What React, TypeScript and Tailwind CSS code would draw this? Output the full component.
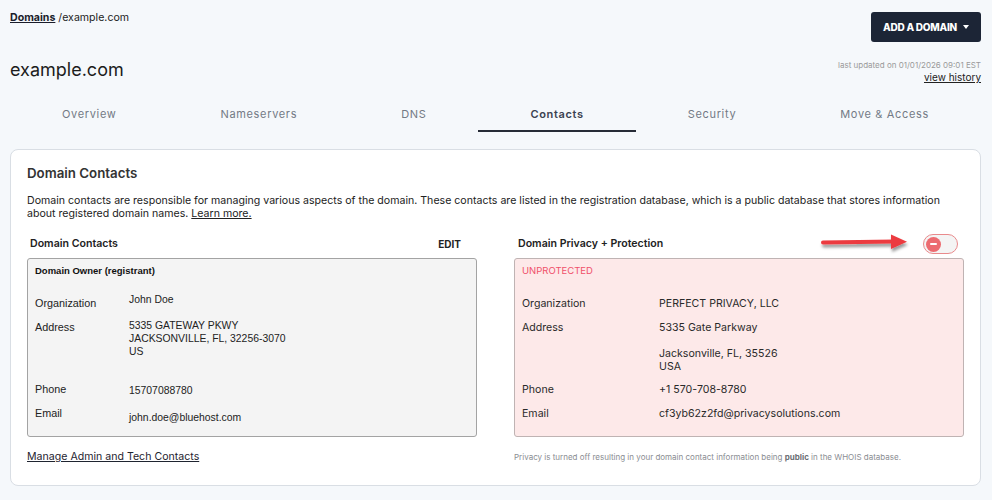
import React from 'react';

const tabs = ['Overview', 'Nameservers', 'DNS', 'Contacts', 'Security', 'Move & Access'];

function Toggle() {
  return (
    <div className="w-[35px] h-[20px] rounded-full border border-[#e98a8c] bg-[#f4f4f4] flex items-center pl-[2px]">
      <div className="w-[15px] h-[15px] rounded-full bg-[#ec6b70] flex items-center justify-center">
        <div className="w-[7px] h-[2px] bg-white rounded-sm" />
      </div>
    </div>
  );
}

function Arrow() {
  return (
    <svg width="98" height="26" viewBox="0 0 98 26" className="absolute left-[-104px] top-[-4px]">
      <defs>
        <filter id="sh" x="-10%" y="-50%" width="130%" height="250%">
          <feDropShadow dx="1" dy="3" stdDeviation="1.6" floodColor="#000" floodOpacity="0.4" />
        </filter>
      </defs>
      <g filter="url(#sh)">
        <path d="M4 12.5 L76 11.5" stroke="#ec3b3f" strokeWidth="4" strokeLinecap="round" />
        <path d="M72 4.5 L88 11.8 L72 19 Z" fill="#ec3b3f" />
      </g>
    </svg>
  );
}

export default function App() {
  return (
    <div className="min-h-[500px] bg-[#f5f8fb] px-[10px] pr-[11px] pt-[10px] pb-[14px] text-[#222]" style={{ fontFamily: 'Inter, "Liberation Sans", sans-serif' }}>
      <div className="flex justify-between items-start">
        <div className="text-[10.6px] leading-[16px]">
          <a className="font-bold underline text-[#1a1d2b]">Domains</a> /example.com
        </div>
        <button className="mt-[2px] w-[110px] h-[30px] rounded-[3px] bg-[#1c2536] text-white text-[10px] font-extrabold tracking-tight flex items-center justify-center gap-[6px]">
          ADD A DOMAIN
          <span className="w-0 h-0 border-l-[3.5px] border-r-[3.5px] border-t-[4px] border-l-transparent border-r-transparent border-t-white" />
        </button>
      </div>

      <div className="mt-[16px] flex justify-between items-start">
        <h1 className="text-[18px] leading-[24px] text-[#1c1c1c]">example.com</h1>
        <div className="mt-[2px] text-right">
          <div className="text-[8px] leading-[10px] text-[#9a9a9a]">last updated on 01/01/2026 09:01 EST</div>
          <a className="block mt-[1px] text-[10px] leading-[12px] underline text-[#222]">view history</a>
        </div>
      </div>

      <div className="mt-[16px] flex">
        {tabs.map((t) => {
          const active = t === 'Contacts';
          return (
            <div
              key={t}
              className={
                active
                  ? 'flex-auto text-center pt-[8px] pb-[9px] text-[11px] leading-[14px] tracking-[0.06em] font-semibold text-[#3a4150] border-b-2 border-[#262b36]'
                  : 'flex-auto text-center pt-[8px] pb-[9px] text-[11px] leading-[14px] tracking-[0.06em] text-[#737a85] border-b-2 border-transparent'
              }
            >
              {t}
            </div>
          );
        })}
      </div>

      <div className="mt-[17px] bg-white border border-[#d9dee4] rounded-[8px] px-[16px] pt-[14px] pb-[21px]">
        <h2 className="text-[13.3px] leading-[18px] font-semibold text-[#333]">Domain Contacts</h2>
        <p className="mt-[12px] text-[10.6px] leading-[13px] text-[#222]">
          Domain contacts are responsible for managing various aspects of the domain. These contacts are listed in the registration database, which is a public database that stores information about registered domain names. <a className="underline">Learn more.</a>
        </p>

        <div className="mt-[14px] grid grid-cols-2 gap-[37px]">
          <div>
            <div className="h-[20px] flex items-center justify-between pl-[3px] pr-[16px] text-[10.6px] font-semibold text-[#222]">
              <span>Domain Contacts</span>
              <span className="font-bold text-[10px]">EDIT</span>
            </div>
            <div className="mt-[4px] h-[179px] bg-[#f4f4f4] border border-[#a3a3a3] rounded-[3px] pl-[7px] pt-[6px]" style={{ fontFamily: '"Liberation Sans", Arial, sans-serif' }}>
              <div className="text-[9.5px] leading-[12px] font-bold text-[#111]">Domain Owner (registrant)</div>
              <div className="mt-[16px] flex text-[10.8px]">
                <div className="w-[94px] pt-[3px] leading-[14px]">Organization</div>
                <div className="leading-[13px] text-[10.4px]">John Doe</div>
              </div>
              <div className="mt-[9px] flex text-[10.8px]">
                <div className="w-[94px] pt-[1px] leading-[14px]">Address</div>
                <div className="leading-[13px] text-[10.4px]">
                  <div>5335 GATEWAY PKWY</div>
                  <div>JACKSONVILLE, FL, 32256-3070</div>
                  <div>US</div>
                </div>
              </div>
              <div className="mt-[24px] flex text-[10.8px]">
                <div className="w-[94px] leading-[14px]">Phone</div>
                <div className="pt-[2px] leading-[13px] text-[10.4px]">15707088780</div>
              </div>
              <div className="mt-[9px] flex text-[10.8px]">
                <div className="w-[94px] leading-[14px]">Email</div>
                <div className="pt-[5px] leading-[13px] text-[10.4px]">john.doe@bluehost.com</div>
              </div>
            </div>
            <a className="block mt-[13px] text-[10.6px] leading-[14px] underline text-[#1f2430]">Manage Admin and Tech Contacts</a>
          </div>

          <div>
            <div className="relative h-[20px] flex items-center justify-between pl-[4px] pr-[6px] text-[10.6px] font-semibold text-[#222]">
              <span>Domain Privacy + Protection</span>
              <div className="relative">
                <Arrow />
                <Toggle />
              </div>
            </div>
            <div className="mt-[4px] h-[179px] bg-[#fde9e9] border border-[#bfb3b3] rounded-[3px] pl-[7px] pt-[6px] text-[10.6px] text-[#2a2a2a]">
              <div className="text-[9.5px] leading-[12px] text-[#f0506a]">UNPROTECTED</div>
              <div className="mt-[20px] flex leading-[14px]">
                <div className="w-[137px]">Organization</div>
                <div>PERFECT PRIVACY, LLC</div>
              </div>
              <div className="mt-[10px] flex leading-[13px]">
                <div className="w-[137px]">Address</div>
                <div>
                  <div>5335 Gate Parkway</div>
                  <div className="h-[13px]" />
                  <div>Jacksonville, FL, 35526</div>
                  <div>USA</div>
                </div>
              </div>
              <div className="mt-[10px] flex leading-[14px]">
                <div className="w-[137px]">Phone</div>
                <div>+1 570-708-8780</div>
              </div>
              <div className="mt-[10px] flex leading-[14px]">
                <div className="w-[137px]">Email</div>
                <div>cf3yb62z2fd@privacysolutions.com</div>
              </div>
            </div>
            <p className="mt-[14px] text-[8px] leading-[12px] text-[#8a8d92]">
              Privacy is turned off resulting in your domain contact information being <span className="font-bold text-[#6b6e73]">public</span> in the WHOIS database.
            </p>
          </div>
        </div>
      </div>
    </div>
  );
}
